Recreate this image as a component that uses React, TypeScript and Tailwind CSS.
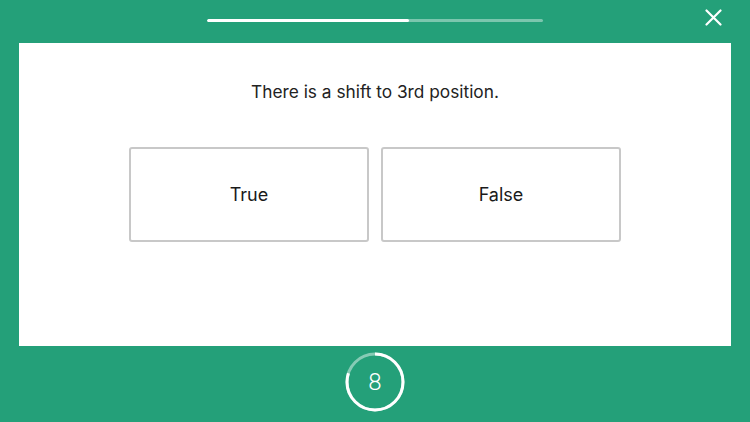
import React from "react";

const GREEN = "#24a079";

function Timer({ remaining, total }: { remaining: number; total: number }) {
  const r = 28;
  const c = 2 * Math.PI * r;
  const elapsed = (total - remaining) / total;
  return (
    <div className="relative w-[60px] h-[60px]">
      <svg width="60" height="60" viewBox="0 0 60 60" className="absolute inset-0">
        <circle cx="30" cy="30" r={r} fill="none" stroke="rgba(255,255,255,0.45)" strokeWidth="3" />
        <circle
          cx="30"
          cy="30"
          r={r}
          fill="none"
          stroke="#ffffff"
          strokeWidth="3"
          strokeDasharray={`${c * (1 - elapsed)} ${c}`}
          transform="rotate(-90 30 30)"
        />
      </svg>
      <div className="absolute inset-0 flex items-center justify-center text-white text-[24px] font-light font-['Roboto',sans-serif]">
        {remaining}
      </div>
    </div>
  );
}

export default function App() {
  const progress = 0.6;

  return (
    <div
      className="w-full h-[422px] flex flex-col font-['Inter',sans-serif] overflow-hidden"
      style={{ backgroundColor: GREEN }}
    >
      {/* Top bar */}
      <div className="relative h-[43px] shrink-0 flex justify-center pt-[19px]">
        <div className="w-[336px] h-[3px] rounded-full bg-white/40 overflow-hidden">
          <div className="h-full bg-white rounded-full" style={{ width: `${progress * 100}%` }} />
        </div>
        <button className="absolute right-[28px] top-[9px] w-[17px] h-[17px]">
          <svg viewBox="0 0 17 17" width="17" height="17">
            <path d="M1.5 1.5 L15.5 15.5 M15.5 1.5 L1.5 15.5" stroke="#fff" strokeWidth="2.2" strokeLinecap="round" />
          </svg>
        </button>
      </div>

      {/* Question card */}
      <div className="mx-[19px] h-[303px] shrink-0 bg-white flex flex-col items-center pt-[38px]">
        <p className="text-[17.3px] leading-[22px] text-[#222222]">There is a shift to 3rd position.</p>
        <div className="mt-[44px] flex gap-[12px]">
          {["True", "False"].map((label) => (
            <button
              key={label}
              className="w-[240px] h-[95px] border-2 border-[#c8c8c8] rounded-[3px] bg-white flex items-center justify-center text-[18px] text-[#1a1a1a]"
            >
              {label}
            </button>
          ))}
        </div>
      </div>

      {/* Timer */}
      <div className="flex justify-center pt-[6px]">
        <Timer remaining={8} total={10} />
      </div>
    </div>
  );
}
